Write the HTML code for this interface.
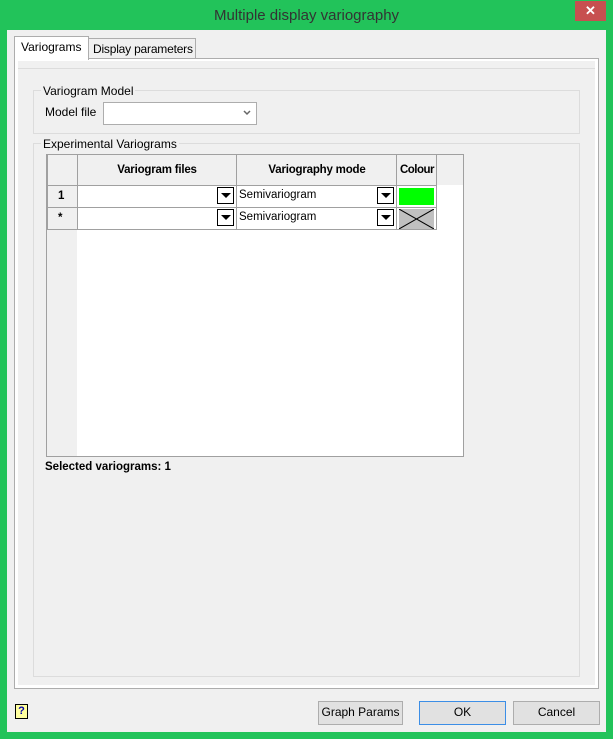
<!DOCTYPE html><html><head><style>
body{margin:0;width:613px;height:739px;background:#22c35a;font-family:"Liberation Sans",Arial,sans-serif;font-size:11.5px;position:relative;overflow:hidden;color:#000}
.a{position:absolute;box-sizing:border-box}
.t{position:absolute;white-space:nowrap}
.dd{position:absolute;width:17px;height:17px;border:1px solid #000;background:#fff;box-sizing:border-box}
.dd:after{content:"";position:absolute;left:3px;top:5px;border-left:5px solid transparent;border-right:5px solid transparent;border-top:5px solid #000}
.btn{position:absolute;background:#e1e1e1;border:1px solid #adadad;box-sizing:border-box;text-align:center;line-height:21px;font-size:12px}
</style></head><body>
<div class="t" style="left:0;width:613px;text-align:center;top:7px;font-size:15px;color:#333">Multiple display variography</div>
<div class="a" style="left:575px;top:1px;width:31px;height:20px;background:#c75050;color:#fff;text-align:center;font-size:13px;line-height:20px;font-weight:bold">✕</div>
<div class="a" style="left:7px;top:30px;width:599px;height:702px;background:#f0f0f0"></div>
<div class="a" style="left:88px;top:38px;width:108px;height:21px;background:#f0f0f0;border:1px solid #adadad;border-bottom:none"></div>
<div class="t" style="left:93px;top:42px;font-size:12px;letter-spacing:-0.2px">Display parameters</div>
<div class="a" style="left:14px;top:58px;width:585px;height:631px;background:#fff;border:1px solid #adadad"></div>
<div class="a" style="left:14px;top:36px;width:75px;height:24px;background:#fff;border:1px solid #adadad;border-bottom:none"></div>
<div class="t" style="left:21px;top:40px;font-size:12px">Variograms</div>
<div class="a" style="left:18px;top:61px;width:577px;height:624px;background:#f0f0f0"></div>
<div class="a" style="left:18px;top:68px;width:577px;height:617px;border-top:1px solid #dcdcdc"></div>
<div class="a" style="left:33px;top:90px;width:547px;height:44px;border:1px solid #dcdcdc"></div>
<div class="t" style="left:41px;top:84px;background:#f0f0f0;padding:0 2px;font-size:12px">Variogram Model</div>
<div class="t" style="left:45px;top:105px;font-size:12px">Model file</div>
<div class="a" style="left:103px;top:102px;width:154px;height:23px;background:#fff;border:1px solid #adadad"></div>
<svg class="a" style="left:243px;top:110px" width="8" height="6"><path d="M1 1L4 4L7 1" stroke="#666" stroke-width="1.5" fill="none"/></svg>
<div class="a" style="left:33px;top:143px;width:547px;height:534px;border:1px solid #dcdcdc"></div>
<div class="t" style="left:41px;top:137px;background:#f0f0f0;padding:0 2px;font-size:12px">Experimental Variograms</div>
<div class="a" style="left:46px;top:154px;width:418px;height:303px;border:1px solid #a0a0a0;background:#fff"></div>
<div class="a" style="left:47px;top:155px;width:416px;height:30px;background:#f0f0f0"></div>
<div class="a" style="left:47px;top:155px;width:30px;height:301px;background:#f0f0f0"></div>
<div class="a" style="left:47px;top:155px;width:390px;height:75px;border:1px solid #a0a0a0;border-top:none"></div>
<div class="a" style="left:47px;top:185px;width:390px;height:1px;background:#a0a0a0"></div>
<div class="a" style="left:47px;top:207px;width:390px;height:1px;background:#a0a0a0"></div>
<div class="a" style="left:77px;top:155px;width:1px;height:75px;background:#a0a0a0"></div>
<div class="a" style="left:236px;top:155px;width:1px;height:75px;background:#a0a0a0"></div>
<div class="a" style="left:396px;top:155px;width:1px;height:75px;background:#a0a0a0"></div>
<div class="a" style="left:436px;top:155px;width:1px;height:30px;background:#a0a0a0"></div>
<div class="t" style="left:77px;width:160px;text-align:center;top:164px;font-weight:bold;letter-spacing:-0.2px">Variogram files</div>
<div class="t" style="left:237px;width:160px;text-align:center;top:164px;font-weight:bold;letter-spacing:-0.2px">Variography mode</div>
<div class="t" style="left:397px;width:40px;text-align:center;top:164px;font-weight:bold;letter-spacing:-0.5px">Colour</div>
<div class="t" style="left:58px;top:190px;font-weight:bold">1</div>
<div class="t" style="left:58px;top:212px;font-weight:bold">*</div>
<div class="dd" style="left:217px;top:187px"></div>
<div class="dd" style="left:217px;top:209px"></div>
<div class="t" style="left:239px;top:189px">Semivariogram</div>
<div class="t" style="left:239px;top:211px">Semivariogram</div>
<div class="dd" style="left:377px;top:187px"></div>
<div class="dd" style="left:377px;top:209px"></div>
<div class="a" style="left:399px;top:188px;width:35px;height:17px;background:#00ff00"></div>
<svg class="a" style="left:399px;top:209px" width="35" height="20"><rect width="35" height="20" fill="#c0c0c0"/><path d="M0 0L35 20M35 0L0 20" stroke="#000" stroke-width="1"/></svg>
<div class="t" style="left:45px;top:461px;font-weight:bold">Selected variograms: 1</div>
<div class="a" style="left:15px;top:704px;width:13px;height:15px;background:#ffffa0;border:1px solid #000;font-size:11px;font-weight:bold;color:#00a;text-align:center;line-height:13px">?</div>
<div class="btn" style="left:318px;top:701px;width:85px;height:24px">Graph Params</div>
<div class="btn" style="left:419px;top:701px;width:87px;height:24px;border-color:#3c8ee6">OK</div>
<div class="btn" style="left:513px;top:701px;width:87px;height:24px">Cancel</div>
</body></html>
